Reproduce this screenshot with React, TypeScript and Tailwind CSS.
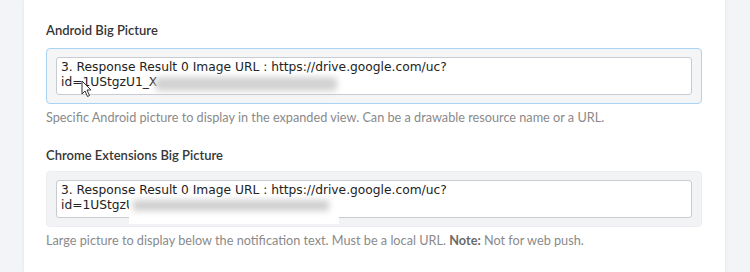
import React from "react";

function Cursor() {
  return (
    <svg className="absolute left-[57px] top-[80px]" width="12" height="18" viewBox="0 0 12 18">
      <path d="M1 1 L1 14 L4 11 L6.5 16.5 L8.5 15.5 L6 10 L10 10 Z" fill="#fff" stroke="#333" strokeWidth="1" strokeLinejoin="round" />
    </svg>
  );
}

function Field({
  label,
  focused,
  idText,
  gapClass,
  desc,
}: {
  label: string;
  focused: boolean;
  idText: string;
  gapClass: string;
  desc: React.ReactNode;
}) {
  return (
    <div className="flex flex-col">
      <div className="text-[13px] font-semibold text-[#363636] leading-[18px] font-['Lato',sans-serif]">{label}</div>
      <div
        className={
          gapClass +
          " rounded-[4px] border px-[9px] pt-[8px] pb-[8px] " +
          (focused ? "border-[#a9d3f5] bg-[#f4f5f7]" : "border-[#ebedf0] bg-[#f2f3f5]")
        }
      >
        <div className="relative h-[38px] rounded-[3px] border border-[#c9cbcf] bg-white px-[4px] pt-[2px] text-[12.25px] leading-[15px] text-[#222] font-['DejaVu_Sans',Verdana,sans-serif]">
          <div className="whitespace-nowrap">3. Response Result 0 Image URL : https://drive.google.com/uc?</div>
          <div className="whitespace-nowrap">{idText}</div>
          {focused ? (
            <div className="absolute left-[98px] top-[19px] h-[14px] w-[182px] bg-[#d2d2d2] blur-[3px] rounded-sm" />
          ) : (
            <div className="absolute left-[72px] top-[17px] h-[26px] w-[210px] bg-white">
              <div className="mt-[2px] ml-[4px] h-[11px] w-[196px] bg-[#d0d0d0] blur-[3px]" />
            </div>
          )}
        </div>
      </div>
      <div className="mt-[5px] text-[12.7px] leading-[16px] text-[#8a8a8a] font-['Lato',sans-serif]">{desc}</div>
    </div>
  );
}

export default function App() {
  return (
    <div className="flex h-[272px] w-[750px] overflow-hidden bg-[#f2f4f8]">
      <div className="w-[24px] shrink-0" />
      <div className="relative w-[701px] shrink-0 bg-white shadow-[0_0_3px_rgba(0,0,0,0.08)] pl-[22px] pr-[23px]">
        <div className="flex flex-col gap-[21px] pt-[21px]">
          <Field
            label="Android Big Picture"
            focused
            idText="id=1UStgzU1_X"
            gapClass="mt-[9px]"
            desc="Specific Android picture to display in the expanded view. Can be a drawable resource name or a URL."
          />
          <Field
            label="Chrome Extensions Big Picture"
            focused={false}
            idText="id=1UStgzU"
            gapClass="mt-[7px]"
            desc={
              <>
                Large picture to display below the notification text. Must be a local URL. <b className="font-bold text-[#6a6a6a]">Note:</b> Not for web push.
              </>
            }
          />
        </div>
        <Cursor />
      </div>
    </div>
  );
}
